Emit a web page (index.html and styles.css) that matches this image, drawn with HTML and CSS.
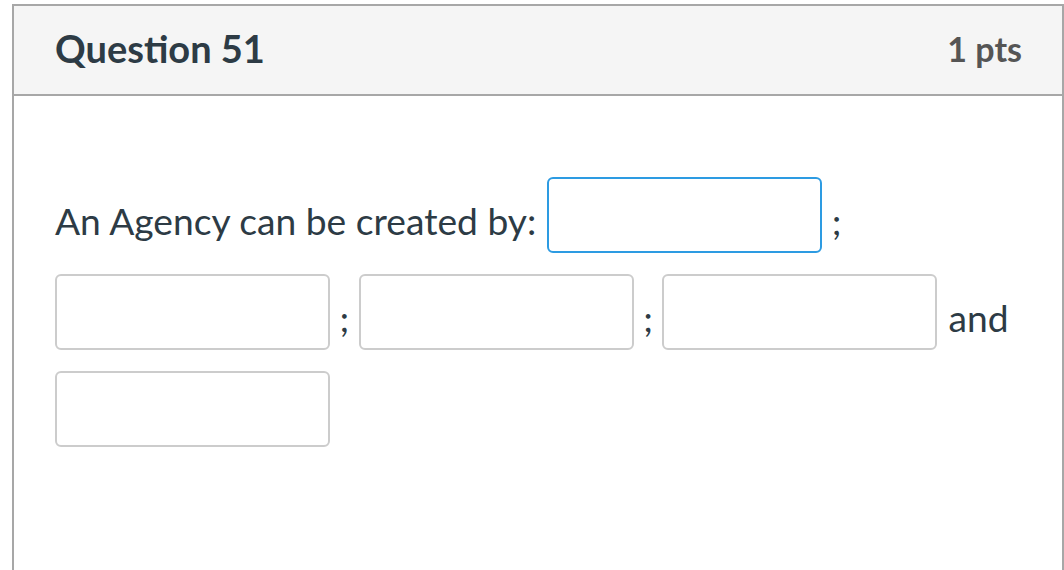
FILE: index.html
```html
<!DOCTYPE html>
<html lang="en">
<head>
<meta charset="utf-8">
<title>Question 51</title>
<link rel="stylesheet" href="styles.css">
</head>
<body>
<div class="question">
  <div class="header">
    <h2 class="title">Question 51</h2>
    <span class="pts">1 pts</span>
  </div>
  <div class="body">
    <div class="text">
      <span class="word">An Agency can be created by:</span>
      <input class="blank focused" type="text" aria-label="blank 1">
      <span class="word sep">;</span>
      <input class="blank" type="text" aria-label="blank 2">
      <span class="word sep">;</span>
      <input class="blank" type="text" aria-label="blank 3">
      <span class="word sep">;</span>
      <input class="blank" type="text" aria-label="blank 4">
      <span class="word">and</span>
      <input class="blank" type="text" aria-label="blank 5">
    </div>
  </div>
</div>
</body>
</html>
```

FILE: styles.css
```css
html, body {
  margin: 0;
  padding: 0;
  background: #ffffff;
}
body {
  font-family: Lato, "Open Sans", "Liberation Sans", sans-serif;
  color: #2d3b45;
  padding: 4px 0 0 12px;
  height: 570px;
  box-sizing: border-box;
  overflow: hidden;
}
.question {
  border: 2px solid #a7a7a7;
  border-bottom: none;
  width: 1052px;
  box-sizing: border-box;
  height: 580px;
}
.header {
  background: #f5f5f5;
  border-bottom: 2px solid #a7a7a7;
  height: 88px;
  display: flex;
  align-items: center;
  justify-content: space-between;
  padding: 0 40px 0 41px;
}
.title {
  margin: 0;
  font-size: 38px;
  font-weight: 700;
  color: #2d3b45;
  position: relative;
  top: -2px;
}
.pts {
  font-size: 34px;
  font-weight: 700;
  color: #555555;
  position: relative;
  top: -2px;
}
.body {
  padding: 81px 40px 0 41px;
}
.text {
  display: flex;
  flex-wrap: wrap;
  align-items: center;
  column-gap: 11px;
  row-gap: 21px;
  font-size: 37.2px;
}
.word {
  padding-top: 12px;
  line-height: 1.2;
}
.word.sep {
  margin: 0 -1.5px;
}
.blank {
  width: 275px;
  height: 76px;
  box-sizing: border-box;
  border: 2px solid #cccccc;
  border-radius: 6px;
  background: #ffffff;
  margin: 0;
  padding: 0 10px;
  font: inherit;
  outline: none;
}
.blank.focused {
  border-color: #2d9be2;
}
```
